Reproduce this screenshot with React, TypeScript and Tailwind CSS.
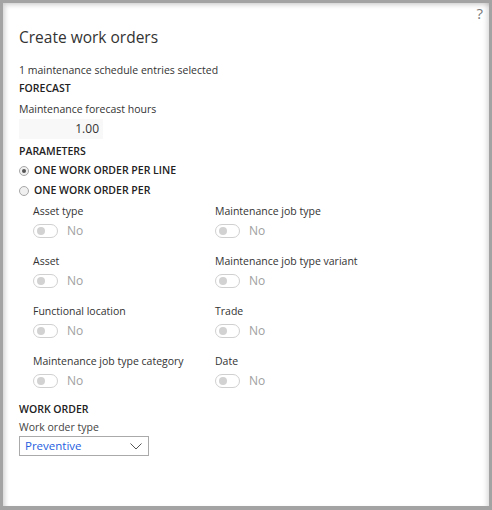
import type { JSX } from 'react'

const FONT = "font-['Open_Sans','Noto_Sans',sans-serif]"

function Toggle(): JSX.Element {
  return (
    <div className="flex h-5 items-center gap-[9px]">
      <span className="relative flex h-[14px] w-[25px] items-center rounded-full border border-[#d0d0d0] bg-white">
        <span className="ml-[3px] h-[8px] w-[8px] rounded-full bg-[#d2d2d2]" />
      </span>
      <span className="text-[12px] text-[#a0a0a0]">No</span>
    </div>
  )
}

function ToggleField({ label }: { label: string }): JSX.Element {
  return (
    <div className="flex h-[50px] flex-col">
      <span className="h-[20px] whitespace-nowrap text-[10.5px] leading-[20px] text-[#333]">{label}</span>
      <Toggle />
    </div>
  )
}

function Radio({ checked, label }: { checked: boolean; label: string }): JSX.Element {
  return (
    <div className="flex h-[20px] items-center gap-[5px]">
      <span className="flex h-[10px] w-[10px] items-center justify-center rounded-full border border-[#a8a8a8] bg-[#f0f0f0]">
        {checked && <span className="h-[4px] w-[4px] rounded-full bg-[#555]" />}
      </span>
      <span className="text-[10.5px] font-semibold text-[#222]">{label}</span>
    </div>
  )
}

export default function App(): JSX.Element {
  const left = ['Asset type', 'Asset', 'Functional location', 'Maintenance job type category']
  const right = ['Maintenance job type', 'Maintenance job type variant', 'Trade', 'Date']

  return (
    <div className={`h-[510px] w-[492px] bg-[#a3a3a3] pb-[4px] pl-[3px] pr-[3px] pt-[3px] ${FONT}`}>
      <div className="relative h-full w-full bg-white shadow-[inset_4px_4px_5px_-2px_rgba(0,0,0,0.18),inset_-5px_0_5px_-3px_rgba(0,0,0,0.15)]">
        {/* help */}
        <span className="absolute right-[6px] top-[-1px] text-[15px] text-[#777]">?</span>

        <div className="flex flex-col pl-[16px] pt-[22px]">
          <h1 className="h-[24px] text-[15.5px] leading-[24px] text-[#333]">Create work orders</h1>

          <p className="mt-[13px] h-[16px] text-[10.5px] leading-[16px] text-[#333]">1 maintenance schedule entries selected</p>
          <div className="h-[21px] text-[10.5px] font-semibold leading-[20px] text-[#222]">FORECAST</div>
          <div className="h-[20px] text-[10.5px] leading-[20px] text-[#333]">Maintenance forecast hours</div>
          <div className="h-[20px] w-[84px] bg-[#f8f8f8] pr-[4px] text-right text-[12px] leading-[20px] text-[#333]">1.00</div>

          <div className="mt-[2px] h-[20px] text-[10.5px] font-semibold leading-[20px] text-[#222]">PARAMETERS</div>
          <Radio checked label="ONE WORK ORDER PER LINE" />
          <Radio checked={false} label="ONE WORK ORDER PER" />

          <div className="grid w-[400px] grid-cols-[182px_1fr] pl-[14px]">
            <div className="flex flex-col">
              {left.map((l) => <ToggleField key={l} label={l} />)}
            </div>
            <div className="flex flex-col">
              {right.map((r) => <ToggleField key={r} label={r} />)}
            </div>
          </div>

          <div className="mt-[-2px] h-[20px] text-[10.5px] font-semibold leading-[20px] text-[#222]">WORK ORDER</div>
          <div className="h-[17px] text-[10.5px] leading-[17px] text-[#444]">Work order type</div>
          <div className="flex h-[20px] w-[130px] items-center justify-between border border-[#aaa] pl-[5px] pr-[6px]">
            <span className="text-[11.5px] text-[#2660e0]">Preventive</span>
            <svg width="12" height="7" viewBox="0 0 12 7" fill="none" stroke="#555" strokeWidth="1">
              <path d="M0.5 0.5 L6 6 L11.5 0.5" />
            </svg>
          </div>
        </div>
      </div>
    </div>
  )
}
